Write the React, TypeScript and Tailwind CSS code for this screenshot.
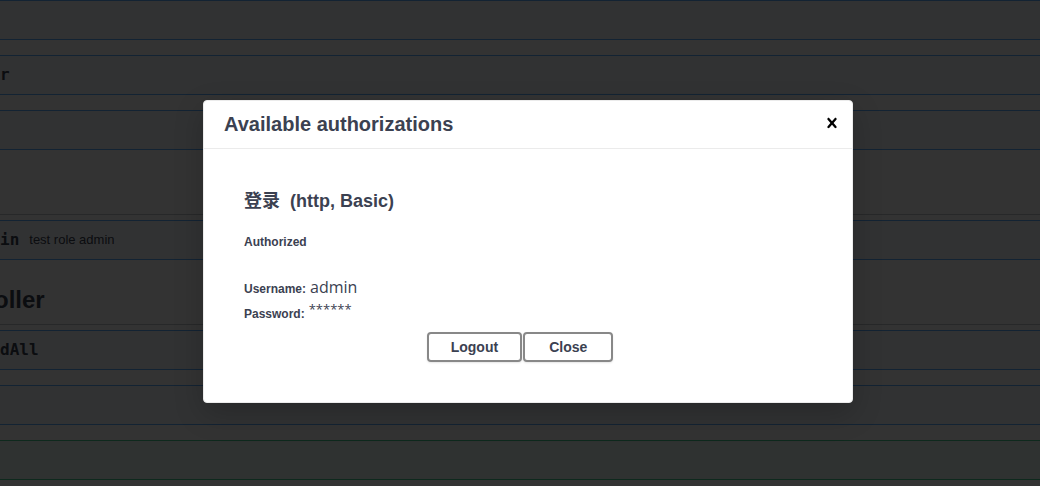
import React from "react";

function OpBlock({ color = "blue", children }: { color?: "blue" | "green"; children?: React.ReactNode }) {
  const cls =
    color === "green"
      ? "border-[#49cc90] bg-[#ecfaf4]"
      : "border-[#61affe] bg-[#f5faff]";
  return (
    <div className={`h-[40px] border-y ${cls} flex items-center`}>{children}</div>
  );
}

function CloseIcon() {
  return (
    <svg width="20" height="20" viewBox="0 0 20 20" className="fill-black mb-[3px]">
      <path d="M14.348 14.849c-.469.469-1.229.469-1.697 0L10 11.819l-2.651 3.029c-.469.469-1.229.469-1.697 0-.469-.469-.469-1.229 0-1.697l2.758-3.15-2.759-3.152c-.469-.469-.469-1.228 0-1.697.469-.469 1.228-.469 1.697 0L10 8.183l2.651-3.031c.469-.469 1.228-.469 1.697 0 .469.469.469 1.229 0 1.697l-2.758 3.152 2.758 3.15c.469.469.469 1.229 0 1.698z" />
    </svg>
  );
}

export default function App() {
  const mono = "font-['DejaVu_Sans_Mono',monospace] font-bold text-[16px] text-[#3b4151]";
  const btn =
    "h-[30px] border-2 border-[#888] rounded-[4px] text-[14px] font-bold text-[#3b4151] bg-white shadow-[0_1px_2px_rgba(0,0,0,0.1)]";
  return (
    <div className="relative w-[1040px] h-[486px] overflow-hidden bg-white font-['Liberation_Sans',sans-serif]">
      {/* underlying page */}
      <div className="flex flex-col">
        <OpBlock />
        <div className="mt-[15px]">
          <OpBlock>
            <span className={mono}>r</span>
          </OpBlock>
        </div>
        <div className="mt-[15px]">
          <OpBlock />
        </div>
        <div className="h-[65px] border-b border-[#c4c6cb]" />
        <div className="mt-[5px]">
          <OpBlock>
            <span className={mono}>in</span>
            <span className="ml-[10px] text-[13px] text-[#3b4151]">test role admin</span>
          </OpBlock>
        </div>
        <div className="h-[65px] border-b border-[#c4c6cb] flex items-end pb-[8px] overflow-hidden">
          <span className="-ml-[6px] text-[24px] leading-[32px] font-bold text-[#3b4151]">oller</span>
        </div>
        <div className="mt-[5px]">
          <OpBlock>
            <span className={mono}>dAll</span>
          </OpBlock>
        </div>
        <div className="mt-[15px]">
          <OpBlock />
        </div>
        <div className="mt-[15px]">
          <OpBlock color="green" />
        </div>
      </div>

      {/* overlay */}
      <div className="absolute inset-0 bg-black/80 pl-[203px] pt-[100px]">
        <div className="w-[650px] h-[303px] bg-white border border-[#ebebeb] rounded-[4px] shadow-[0_10px_30px_0_rgba(0,0,0,0.2)] flex flex-col">
          <div className="h-[48px] shrink-0 border-b border-[#ebebeb] flex items-center justify-between pl-[20px] pr-[10px]">
            <h3 className="text-[20px] font-bold text-[#3b4151] mb-[1px]">Available authorizations</h3>
            <CloseIcon />
          </div>
          <div className="flex flex-col pl-[40px] pr-[40px] pt-[40px] text-[#3b4151]">
            <h4 className="text-[18px] leading-[24px] font-bold font-['Liberation_Sans','Noto_Sans_CJK_SC',sans-serif] whitespace-pre">
              登录{"\u00a0 "}(http, Basic)
            </h4>
            <div className="mt-[21px] text-[12px] leading-[16px] font-bold">Authorized</div>
            <div className="mt-[25px] h-[24px] flex items-baseline text-[12px]">
              <span className="font-bold">Username:</span>
              <span className="ml-[4px] text-[16px] font-['Open_Sans',sans-serif]">admin</span>
            </div>
            <div className="mt-[5px] h-[24px] flex items-baseline text-[12px]">
              <span className="font-bold">Password:</span>
              <span className="ml-[4px] text-[13px] font-['Open_Sans',sans-serif] -translate-y-[4px]">******</span>
            </div>
            <div className="mt-[4px] flex justify-center">
              <div className="flex gap-[1px] mr-[16px]">
                <button className={`${btn} px-[22px]`}>Logout</button>
                <button className={`${btn} px-[24px]`}>Close</button>
              </div>
            </div>
          </div>
        </div>
      </div>
    </div>
  );
}
